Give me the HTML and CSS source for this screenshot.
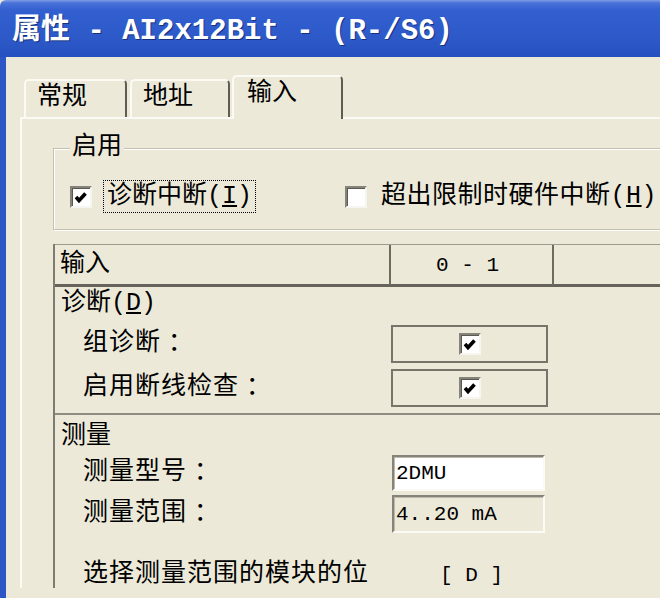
FILE: index.html
```html
<!DOCTYPE html>
<html lang="zh">
<head>
<meta charset="utf-8">
<title>属性 - AI2x12Bit - (R-/S6)</title>
<link rel="stylesheet" href="styles.css">
</head>
<body>
<div class="window">
  <div class="titlebar">属性 - AI2x12Bit - (R-/S6)</div>
  <div class="client">
    <div class="tabs">
      <div class="tab tab1">常规</div>
      <div class="tab tab2">地址</div>
      <div class="tab active">输入</div>
    </div>
    <div class="panel">
      <fieldset class="group">
        <legend>启用</legend>
        <div class="check-row">
          <span class="cb"><svg viewBox="0 0 18 18" width="18" height="18"><polyline points="4,8 7,11.5 13.5,4.5" /></svg></span>
          <span class="focus">诊断中断(<u>I</u>)</span>
          <span class="cb cb2"></span>
          <span class="opt-text">超出限制时硬件中断(<u>H</u>)</span>
        </div>
      </fieldset>
      <div class="table">
        <div class="thead">
          <div class="th c1">输入</div>
          <div class="th c2"><span class="mono">0 - 1</span></div>
          <div class="th c3"></div>
        </div>
        <div class="section diag">
          <div class="sec-title">诊断(<u>D</u>)</div>
          <div class="row">
            <div class="label">组诊断<span class="colon">：</span></div>
            <div class="cellbox"><span class="cb"><svg viewBox="0 0 18 18" width="18" height="18"><polyline points="4,8 7,11.5 13.5,4.5" /></svg></span></div>
          </div>
          <div class="row row2">
            <div class="label">启用断线检查<span class="colon">：</span></div>
            <div class="cellbox"><span class="cb"><svg viewBox="0 0 18 18" width="18" height="18"><polyline points="4,8 7,11.5 13.5,4.5" /></svg></span></div>
          </div>
        </div>
        <div class="section meas">
          <div class="sec-title">测量</div>
          <div class="row frow">
            <div class="label">测量型号<span class="colon">：</span></div>
            <div class="field white"><span class="mono">2DMU</span></div>
          </div>
          <div class="row frow frow2">
            <div class="label">测量范围<span class="colon">：</span></div>
            <div class="field ro"><span class="mono">4..20 mA</span></div>
          </div>
          <div class="row lrow">
            <div class="label">选择测量范围的模块的位</div>
            <div class="bits"><span class="mono">[ D ]</span></div>
          </div>
        </div>
      </div>
    </div>
  </div>
</div>
</body>
</html>
```
FILE: styles.css
```css
html, body {
  margin: 0;
  padding: 0;
  background: #ECE9D8;
}
body {
  font-family: "Liberation Mono", "Noto Sans CJK SC", monospace;
  color: #000;
}
.window {
  width: 660px;
  height: 598px;
  overflow: hidden;
  display: flex;
  flex-direction: column;
  background: #ECE9D8;
}
.titlebar {
  flex: none;
  height: 57px;
  box-sizing: border-box;
  padding: 13px 0 0 12px;
  background: linear-gradient(to bottom, #7f9de6 0px, #4a72d8 3px, #3360d0 10px, #2c58c8 40px, #2650c0 57px);
  color: #fff;
  font-weight: bold;
  font-size: 29px;
  line-height: 38px;
  white-space: nowrap;
  text-shadow: 1px 1px 0 #15307e;
  border-top-left-radius: 6px;
}
.client {
  flex: 1;
  border-left: 6px solid #2c55c6;
  padding-top: 18px;
  font-size: 25px;
}
.tabs {
  display: flex;
  align-items: flex-end;
  height: 42px;
  margin-left: 18px;
  position: relative;
  z-index: 1;
}
.tab {
  box-sizing: border-box;
  height: 38px;
  border: 2px solid #fbfaf4;
  border-bottom: none;
  border-right-color: #5f5d53;
  border-radius: 5px 5px 0 0;
  padding-left: 11px;
  line-height: 34px;
  background: #ECE9D8;
  white-space: nowrap;
}
.tab1 { width: 103px; }
.tab2 { width: 100px; margin-left: 3px; }
.tab.active {
  width: 111px;
  height: 44px;
  margin-left: 2px;
  margin-bottom: -2px;
  padding-left: 13px;
}
.panel {
  margin-left: 14px;
  width: 720px;
  border-top: 2px solid #fbfaf4;
  border-left: 2px solid #fbfaf4;
  padding: 16px 0 0 31px;
}
.group {
  margin: 0;
  padding: 0 0 16px 16px;
  border: 1px solid #c4c1b0;
  box-shadow: inset 1px 1px 0 #fff, 1px 1px 0 #fff;
  min-width: 0;
}
.group legend {
  padding: 0 2px;
  line-height: 26px;
  background: #ECE9D8;
}
.check-row {
  display: flex;
  align-items: center;
  height: 33px;
  margin-top: 19px;
}
.cb {
  flex: none;
  width: 22px;
  height: 22px;
  box-sizing: border-box;
  border: 2px solid;
  border-color: #86847a #f6f5ef #f6f5ef #86847a;
  box-shadow: inset 1px 1px 0 #5a5950;
  background: #fff;
  display: flex;
  align-items: center;
  justify-content: center;
}
.cb svg {
  margin-top: 2px;
}
.cb svg polyline {
  fill: none;
  stroke: #000;
  stroke-width: 3.6;
  stroke-linejoin: miter;
  stroke-linecap: butt;
}
.focus {
  margin-left: 11px;
  border: 1px dotted #000;
  padding: 0 3px;
  line-height: 31px;
  white-space: nowrap;
}
.cb2 { margin-left: 89px; }
.opt-text {
  margin-left: 14px;
  white-space: nowrap;
  line-height: 31px;
  letter-spacing: 0.5px;
}
.table {
  margin-top: 14px;
  border-left: 2px solid #7e7c70;
}
.thead {
  display: grid;
  grid-template-columns: 336px 163px 1fr;
  height: 43px;
  box-sizing: border-box;
  border-top: 1px solid #9c9a8c;
  border-bottom: 3px solid #66645a;
}
.th {
  box-sizing: border-box;
  line-height: 39px;
}
.c1 { padding-left: 5px; border-right: 2px solid #6e6c61; }
.c2 { border-right: 2px solid #6e6c61; text-align: center; padding-right: 8px; }
.mono { font-size: 21px; letter-spacing: 0; }
.colon { margin-left: 7px; }
.diag { padding: 4px 0 6px; }
.sec-title {
  line-height: 26px;
  padding-left: 6px;
}
.row {
  display: grid;
  grid-template-columns: 336px 157px;
  height: 38px;
}
.diag .row { margin-top: 8px; }
.diag .row2 { margin-top: 6px; }
.label {
  padding-left: 28px;
  line-height: 38px;
  white-space: nowrap;
  letter-spacing: 1px;
}
.cellbox {
  box-sizing: border-box;
  border: 2px solid #77756a;
  display: flex;
  align-items: center;
  justify-content: center;
}
.meas {
  border-top: 2px solid #8f8d80;
  padding-top: 9px;
}
.frow { height: 36px; margin-top: 5px; }
.frow .label { line-height: 36px; }
.frow2 { height: 38px; margin-top: 4px; }
.frow2 .label { line-height: 38px; }
.field {
  box-sizing: border-box;
  width: 153px;
  margin-left: 1px;
  border: 2px solid;
  border-color: #86847a #fbfaf6 #fbfaf6 #86847a;
  box-shadow: inset 1px 1px 0 #bdbaab;
  padding-left: 2px;
  display: flex;
  align-items: center;
}
.field.white { background: #fff; }
.field.ro { background: #ECE9D8; }
.lrow { margin-top: 29px; height: 26px; }
.lrow .label { line-height: 26px; }
.bits {
  padding-left: 49px;
  line-height: 26px;
  white-space: nowrap;
}
```
